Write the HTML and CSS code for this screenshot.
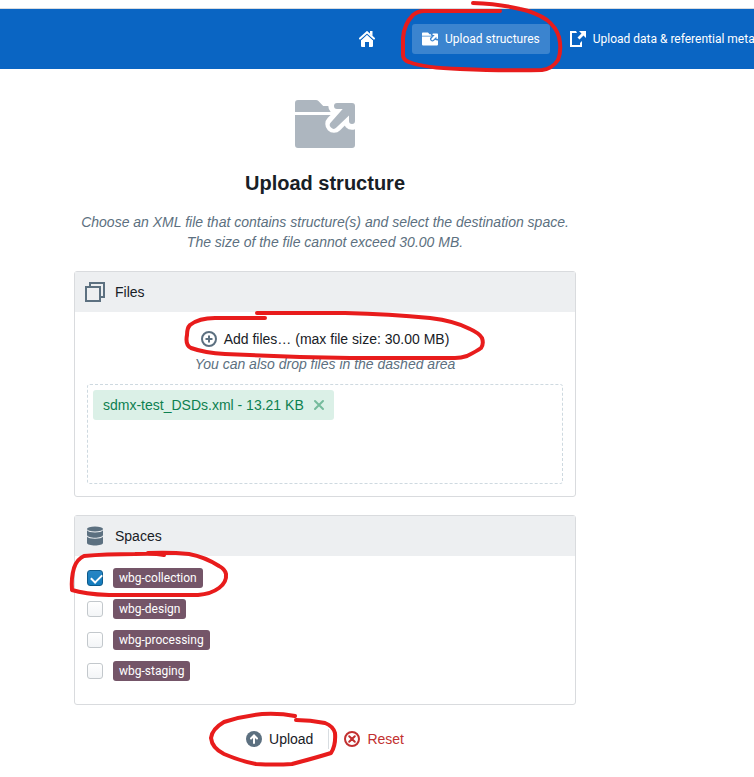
FILE: index.html
```html
<!DOCTYPE html>
<html lang="en">
<head>
<meta charset="utf-8">
<title>Upload structure</title>
<link rel="stylesheet" href="styles.css">
</head>
<body>
<svg class="defs" aria-hidden="true">
  <defs>
    <mask id="arrow-gap" maskUnits="userSpaceOnUse" x="0" y="0" width="20" height="20">
      <rect width="20" height="20" fill="#fff"/>
      <path d="M14 4h5v5M19 4l-6 6" fill="none" stroke="#000" stroke-width="5.800" stroke-linecap="round" stroke-linejoin="round"/>
    </mask>
    <symbol id="folder-shared" viewBox="0 0 20 20">
      <g mask="url(#arrow-gap)">
        <path d="M0 6V3a1 1 0 0 1 1-1h6c.3 0 .6.1.8.3L9.400 4H19a1 1 0 0 1 1 1v1zM0 7h20v10a1 1 0 0 1-1 1H1a1 1 0 0 1-1-1z"/>
      </g>
      <path d="M14 3h5a1 1 0 0 1 1 1v5a1 1 0 0 1-2 0V7.200l-4.200 4a1.200 1.200 0 0 1-1.800-1.800L15.900 5H14a1 1 0 0 1 0-2z"/>
    </symbol>
  </defs>
</svg>
<header class="topbar">
  <nav class="nav">
    <a class="nav-link nav-home" href="#" aria-label="Home">
      <svg class="icon" viewBox="0 0 16 16"><path d="M2 9.300V15a1 1 0 0 0 1 1h3v-5h4v5h3a1 1 0 0 0 1-1V9.300L8 3.500z"/><path d="M1 7.500L8 1l7 6.500" fill="none" stroke="#0a65c3" stroke-width="4"/><path d="M1 7.500L8 1.200l7 6.300" fill="none" stroke="currentColor" stroke-width="2" stroke-linecap="round"/><path d="M11 0h2.500v5L11 3z"/></svg>
    </a>
    <span class="divider"></span>
    <a class="nav-link active" href="#"><svg class="icon"><use href="#folder-shared"/></svg>Upload structures</a>
    <a class="nav-link" href="#"><svg class="icon" viewBox="0 0 16 16"><path d="M6 0H0v16h12v-6l-2 2v2H2V2h5zM9 0h7v7l-2.500-2.500L9.500 8.500 7.500 6.500l4-4z"/></svg>Upload data &amp; referential metadata</a>
  </nav>
</header>
<main class="page">
  <svg class="hero"><use href="#folder-shared"/></svg>
  <h1>Upload structure</h1>
  <p class="lead">Choose an XML file that contains structure(s) and select the destination space.<br>The size of the file cannot exceed 30.00 MB.</p>

  <section class="card">
    <h2 class="card-head"><svg class="icon large" viewBox="0 0 20 20"><path d="M5 4V1h14v14h-3M1 5h14v14H1z" fill="none" stroke="currentColor" stroke-width="2"/></svg>Files</h2>
    <div class="files-body">
      <button class="button" type="button"><svg class="icon" viewBox="0 0 16 16"><path d="M8 1a7 7 0 1 0 0 14A7 7 0 0 0 8 1zM8 4.500v7M4.500 8h7" fill="none" stroke="currentColor" stroke-width="2"/></svg>Add files… (max file size: 30.00 MB)</button>
      <p class="hint">You can also drop files in the dashed area</p>
      <div class="dropzone">
        <span class="file">sdmx-test_DSDs.xml - 13.21 KB
          <button class="remove" type="button" aria-label="Remove file"><svg class="cross" viewBox="0 0 12 12"><path d="M2 2l8 8M10 2l-8 8" fill="none" stroke="currentColor" stroke-width="2" stroke-linecap="round"/></svg></button>
        </span>
      </div>
    </div>
  </section>

  <section class="card">
    <h2 class="card-head"><svg class="icon large" viewBox="0 0 20 20"><ellipse cx="10" cy="3" rx="8" ry="2.500"/><path d="M2 4.300C3 5.800 6 6.500 10 6.500s7-.7 8-2.200V9c0 1.700-4 2.700-8 2.700S2 10.700 2 9zM2 10.800c1 1.300 4 1.900 8 1.900s7-.6 8-1.900V17c0 1.500-4 2.500-8 2.500S2 18.500 2 17z"/></svg>Spaces</h2>
    <div class="spaces">
      <label class="space"><input type="checkbox" checked><span class="tag">wbg-collection</span></label>
      <label class="space"><input type="checkbox"><span class="tag">wbg-design</span></label>
      <label class="space"><input type="checkbox"><span class="tag">wbg-processing</span></label>
      <label class="space"><input type="checkbox"><span class="tag">wbg-staging</span></label>
    </div>
  </section>

  <div class="actions">
    <button class="button" type="button"><svg class="icon" viewBox="0 0 16 16"><circle cx="8" cy="8" r="8"/><path d="M8 12V4.500M5 7.500l3-3 3 3" fill="none" stroke="#fff" stroke-width="2" stroke-linecap="round"/></svg>Upload</button>
    <span class="divider"></span>
    <button class="button danger" type="button"><svg class="icon" viewBox="0 0 16 16"><circle cx="8" cy="8" r="7" fill="none" stroke="currentColor" stroke-width="2"/><path d="M5.200 5.200l5.600 5.600M10.800 5.200l-5.600 5.600" fill="none" stroke="currentColor" stroke-width="2" stroke-linecap="round"/></svg>Reset</button>
  </div>
</main>
<svg class="marks" viewBox="0 0 754 777" aria-hidden="true">
  <path d="M500 11H424Q418 11 413 15Q404 24 403 38V55Q403 60 409 62Q425 68 460 69Q510 71 542 70Q552 69 558 60Q562 50 559 37Q556 27 547 20Q535 12 520 9Q500 4 473 3"/>
  <path d="M265 318H215Q199 318 190 325Q187 328 187 335Q185 345 191 348Q205 353 225 354L300 357L350 358H455Q461 358 467 356Q477 351 481 348Q484 344 482 338Q479 333 470 329Q455 321 430 318Q390 314 345 313H257"/>
  <path d="M164 555Q155 553 135 554Q105 554 84 556Q77 559 74 568Q71 578 72 590Q84 594 109 595H198Q211 594 219 588Q227 582 226 574Q225 569 219 566Q205 557 189 554Q170 552 148 553"/>
  <path d="M295 716Q280 713 262 714Q242 716 224 722Q212 729 211 738Q212 748 224 754Q240 761 256 764Q275 765 292 764Q315 758 331 753Q336 745 335 733Q333 726 325 723Q310 720 296 720"/>
</svg>
</body>
</html>
```

FILE: styles.css
```css
* { box-sizing: border-box; }

body {
  margin: 0;
  position: relative;
  overflow-x: hidden;
  background: #fff;
  color: #182026;
  font: 14px/20px "Liberation Sans", Arial, sans-serif;
}

.defs { position: absolute; width: 0; height: 0; }

.icon {
  width: 16px;
  height: 16px;
  flex: none;
  fill: currentColor;
}

.icon.large { width: 20px; height: 20px; color: #5c7080; }

.topbar {
  margin-top: 8px;
  height: 61px;
  border-top: 1px solid #d8dbe0;
  background: #0a65c3;
  color: #fff;
}

.nav {
  display: flex;
  align-items: center;
  gap: 10px;
  height: 60px;
  padding-left: 349px;
}

.nav-link {
  display: flex;
  flex: none;
  align-items: center;
  gap: 7px;
  height: 30px;
  padding: 0 10px;
  border-radius: 3px;
  color: inherit;
  font: 400 12px/20px Roboto, sans-serif;
  text-decoration: none;
  white-space: nowrap;
}

.nav-link.active { background: #3b84cf; margin-left: 5px; }

.divider { width: 1px; height: 20px; background: #d8dde1; }
.nav .divider { background: #3178c8; margin-left: 2px; }

.page {
  display: flex;
  flex-direction: column;
  padding: 25px 178px 24px 74px;
}

.hero { width: 60px; height: 60px; align-self: center; fill: #adb6bf; }

h1 {
  margin: 17px 0;
  font-size: 20px;
  line-height: 24px;
  text-align: center;
}

.lead { margin: 0 0 1px; color: #5c7080; font-style: italic; text-align: center; }

.card {
  margin-top: 18px;
  border: 1px solid #d9dbde;
  border-radius: 3px;
}

.card-head {
  display: flex;
  align-items: center;
  gap: 10px;
  height: 40px;
  margin: 0;
  padding: 0 10px;
  background: #edeff1;
  font-size: 14px;
  font-weight: 400;
}

.files-body {
  display: flex;
  flex-direction: column;
  align-items: center;
  padding: 12px;
}

.button {
  display: flex;
  align-items: center;
  gap: 7px;
  height: 30px;
  padding: 0 8px;
  border: 0;
  background: none;
  color: inherit;
  font: inherit;
}

.button .icon { color: #5c7080; }
.button.danger, .button.danger .icon { color: #c23030; }

.hint { margin: 0; color: #5c7080; font-style: italic; }

.dropzone {
  align-self: stretch;
  height: 100px;
  margin-top: 10px;
  padding: 5px;
  border: 1px dashed #ced9e0;
  border-radius: 3px;
}

.file {
  display: inline-flex;
  align-items: center;
  gap: 9px;
  height: 30px;
  padding: 0 9px 0 10px;
  border-radius: 3px;
  background: #dbf0e7;
  color: #0d8050;
}

.remove {
  display: flex;
  padding: 0;
  border: 0;
  background: none;
  color: #75bb9c;
}

.cross { width: 12px; height: 12px; }

.spaces {
  display: flex;
  flex-direction: column;
  gap: 11px;
  padding: 12px 12px 23px;
}

.space { display: flex; align-items: center; gap: 10px; }

.space input {
  appearance: none;
  width: 16px;
  height: 16px;
  margin: 0;
  border: 1px solid #c3c8cc;
  border-radius: 3px;
  background: linear-gradient(#fff, #f3f5f7);
}

.space input:checked {
  border-color: #0e5a8a;
  background: linear-gradient(#2786c4, #137cbd);
}

.space input:checked::before {
  content: "";
  display: block;
  width: 9px;
  height: 5px;
  margin: 3px;
  border: solid #fff;
  border-width: 0 0 2px 2px;
  transform: rotate(-45deg);
}

.tag {
  padding: 2px 6px;
  border-radius: 3px;
  background: #745568;
  color: #fff;
  font: 400 12px/16px Roboto, sans-serif;
}

.actions {
  display: flex;
  align-items: center;
  justify-content: center;
  gap: 7px;
  margin-top: 19px;
}

.marks {
  position: absolute;
  top: 0;
  left: 0;
  width: 754px;
  height: 777px;
  fill: none;
  stroke: #e81c1c;
  stroke-width: 4;
  stroke-linecap: round;
  stroke-linejoin: round;
  pointer-events: none;
}
```
